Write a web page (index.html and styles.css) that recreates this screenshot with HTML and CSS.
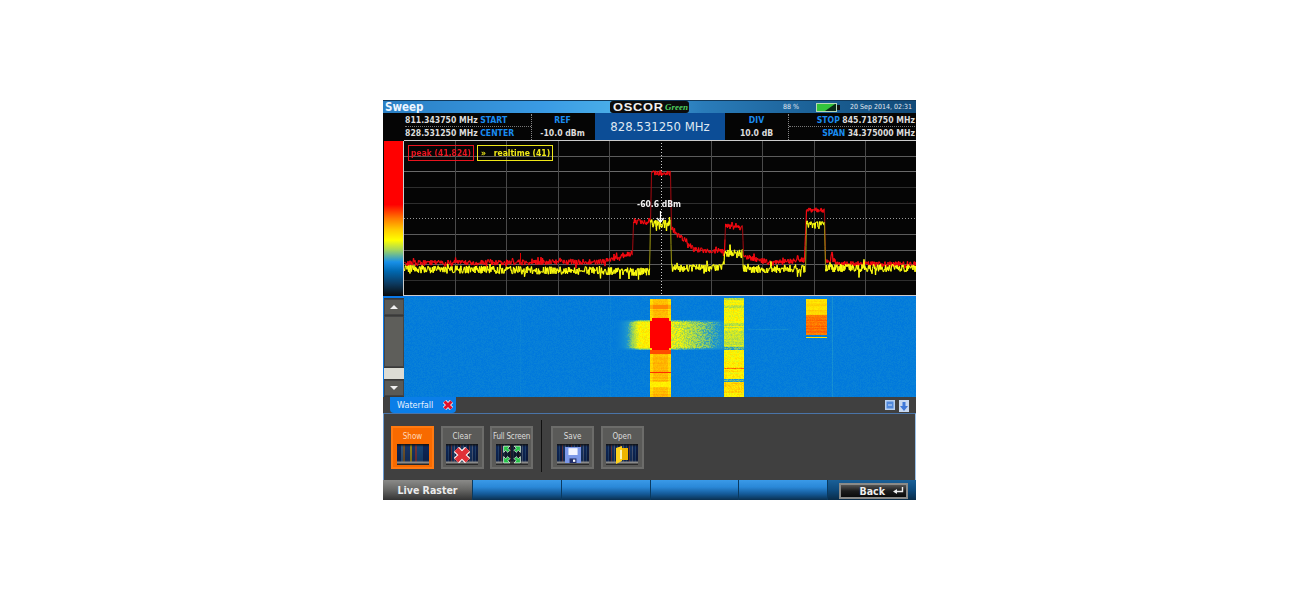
FILE: index.html
```html
<!DOCTYPE html>
<html lang="en">
<head>
<meta charset="utf-8">
<title>Sweep</title>
<link rel="stylesheet" href="styles.css">
</head>
<body>
<main class="device">
  <header class="titlebar">
    <span class="title">Sweep</span>
    <div class="logo"><span class="logo-word">OSCOR</span><span class="logo-green">Green</span></div>
    <div class="status">
      <span class="pct">88 %</span>
      <svg class="battery" viewBox="0 0 24 9" width="24" height="9"><rect x="0.5" y="0.5" width="20" height="8" fill="#0a2a18" stroke="#b8d8b8"/><path d="M1 1h18L9 8H1z" fill="#33c43a"/><rect x="21" y="2" width="3" height="5" fill="#111"/></svg>
      <span class="date">20 Sep 2014, 02:31</span>
    </div>
  </header>
  <section class="info">
    <div class="info-cell info-left">
      <div class="line dotted-b"><span>811.343750 MHz</span> <b>START</b></div>
      <div class="line"><span>828.531250 MHz</span> <b>CENTER</b></div>
    </div>
    <div class="info-cell info-mid"><b>REF</b><span>-10.0 dBm</span></div>
    <div class="info-center">828.531250 MHz</div>
    <div class="info-cell info-div"><b>DIV</b><span>10.0 dB</span></div>
    <div class="info-cell info-right">
      <div class="line dotted-b"><b>STOP</b> <span>845.718750 MHz</span></div>
      <div class="line"><b>SPAN</b> <span>34.375000 MHz</span></div>
    </div>
  </section>
  <section class="chart-row">
    <div class="colorbar"></div>
    <div class="chart">
      <svg class="grid" id="grid" viewBox="0 0 512 156" width="512" height="156"></svg>
      <canvas id="traces" width="512" height="156"></canvas>
      <div class="legend">
        <span class="tag tag-red">peak (41,824)</span>
        <span class="tag tag-yellow"><i>»</i> realtime (41)</span>
      </div>
      <div class="marker">-60.6 dBm</div>
      <svg class="marker-arrow" viewBox="0 0 9 12" width="9" height="12"><path d="M4.5 0v11M1 7l3.5 4L8 7" fill="none" stroke="#fff" stroke-width="1.2"/></svg>
    </div>
  </section>
  <section class="fall-row">
    <div class="scroll">
      <div class="sbtn"><span class="up"></span></div>
      <div class="strack"></div>
      <div class="sthumb"></div>
      <div class="sbtn"><span class="down"></span></div>
    </div>
    <canvas id="fall" width="512" height="100"></canvas>
  </section>
  <nav class="tabs">
    <div class="tab">Waterfall
      <svg class="tab-x" viewBox="0 0 12 12" width="12" height="12"><path d="M2.500 2.500l7 7M9.500 2.500l-7 7" stroke="#fff" stroke-width="4.500"/><path d="M2.500 2.500l7 7M9.500 2.500l-7 7" stroke="#e0102a" stroke-width="3"/></svg>
    </div>
    <div class="tab-icons">
      <svg viewBox="0 0 10 10" width="10" height="10"><rect width="10" height="10" fill="#b8d0f0"/><rect x="1.500" y="1.500" width="7" height="7" fill="#4f88dc"/><path d="M3 5h4" stroke="#cfe0f8"/></svg>
      <svg viewBox="0 0 10 12" width="10" height="12"><rect width="10" height="12" fill="#c8d8f0"/><path d="M3.500 2h3v4H9l-4 5-4-5h2.500z" fill="#3f78d8"/></svg>
    </div>
  </nav>
  <section class="panel">
    <div class="group">
      <button class="tool tool-on"><span>Show</span><span class="thumb thumb-show"></span></button>
      <button class="tool"><span>Clear</span><span class="thumb">
        <svg viewBox="0 0 16 16" width="18" height="18"><path d="M3 3l10 10M13 3L3 13" stroke="#fff" stroke-width="6.500"/><path d="M3 3l10 10M13 3L3 13" stroke="#e03038" stroke-width="4.500"/></svg>
      </span></button>
      <button class="tool"><span class="tight">Full Screen</span><span class="thumb">
        <svg viewBox="0 0 20 20" width="22" height="21"><rect x="1" y="1" width="18" height="18" fill="#111" opacity=".55"/><path d="M2 2l6 0-2 2 2 2-2 2-2-2-2 2zM18 2l-6 0 2 2-2 2 2 2 2-2 2 2zM2 18l6 0-2-2 2-2-2-2-2 2-2-2zM18 18l-6 0 2-2-2-2 2-2 2 2 2-2z" fill="#25c448" stroke="#eee" stroke-width=".7"/></svg>
      </span></button>
    </div>
    <div class="sep"></div>
    <div class="group">
      <button class="tool"><span>Save</span><span class="thumb">
        <svg viewBox="0 0 14 14" width="16" height="16"><path d="M0 0h14v14H0z" fill="#7c98e8"/><rect x="3" y="1" width="8" height="6" fill="#f2f4ff"/><rect x="4" y="10" width="6" height="4" fill="#24306a"/><rect x="7" y="11" width="2" height="2" fill="#fff"/></svg>
      </span></button>
      <button class="tool"><span>Open</span><span class="thumb">
        <svg viewBox="0 0 14 18" width="14" height="18"><path d="M1 2l6-2v15l-6 3z" fill="#ffd21e"/><path d="M7 2h6v12H7z" fill="#f0b400"/><path d="M5 4h2v9H5z" fill="#fff3b0"/></svg>
      </span></button>
    </div>
  </section>
  <footer class="softkeys">
    <div class="key key-live">Live Raster</div>
    <div class="key"></div>
    <div class="key"></div>
    <div class="key"></div>
    <div class="key"></div>
    <div class="key-back">
      <div class="back">Back <svg viewBox="0 0 11 8" width="11" height="8"><path d="M9.500 0v4.500H3" fill="none" stroke="#eee" stroke-width="1.400"/><path d="M0 4.500L4 2v5z" fill="#eee"/></svg></div>
    </div>
  </footer>
</main>
<script src="script.js"></script>
</body>
</html>
```
FILE: styles.css
```css
* { box-sizing: border-box; }
html, body { margin: 0; height: 100%; background: #fff; }
body { padding: 100px 0 0 383px; font-family: "DejaVu Sans", sans-serif; font-stretch: condensed; }
.device { width: 533px; height: 400px; display: flex; flex-direction: column; background: #404040; color: #e8e8e8; overflow: hidden; filter: blur(.3px); }
svg, canvas { display: block; }

.titlebar { height: 13px; flex: none; display: flex; align-items: center; background: linear-gradient(90deg, #2a7fc4 0, #3a9be4 30%, #49ade8 43%, #2a7cba 60%, #1c6298 80%, #114a78 100%); border-top: 1px solid #123a5c; }
.title { font-size: 11.500px; line-height: 12px; font-weight: bold; color: #eef6ff; margin-left: 2px; width: 225px; }
.logo { width: 79px; height: 12px; flex: none; background: #0c0c0c; border-radius: 3px; display: flex; align-items: center; padding-left: 3px; overflow: hidden; }
.logo-word { font: bold 10px/11px "Liberation Sans", sans-serif; letter-spacing: 0.6px; color: #f2f2f2; transform: scaleX(1.28); transform-origin: left center; width: 52px; flex: none; }
.logo-green { font: italic bold 9px/10px "Liberation Serif", serif; color: #4fd060; }
.status { flex: 1; display: flex; align-items: center; font-size: 7px; color: #e0e8f0; }
.pct { margin-left: 94px; width: 33px; flex: none; }
.date { margin-left: 10px; white-space: nowrap; }

.info { height: 27px; flex: none; display: flex; background: #050505; font-size: 8.600px; line-height: 13px; color: #dcdcdc; padding-top: 1px; }
.info b { color: #1a8cf0; font-weight: bold; }
.info span { font-weight: bold; }
.info-cell { height: 26px; }
.info-left { margin-left: 21px; width: 128px; border-right: 1px dotted #888; padding-left: 1px; }
.line { height: 13px; white-space: nowrap; }
.dotted-b { border-bottom: 1px dotted #777; }
.info-mid, .info-div { display: flex; flex-direction: column; align-items: center; }
.info-mid { width: 63px; padding-right: 2px; }
.info-center { width: 130px; margin-top: -1px; height: 27px; background: #0c4d96; color: #dfe8f2; font-size: 13px; line-height: 28px; text-align: center; }
.info-div { width: 64px; border-right: 1px dotted #888; }
.info-right { flex: 1; text-align: right; padding-right: 1px; }

.chart-row { height: 156px; flex: none; display: flex; background: #050505; }
.colorbar { width: 20px; margin: 1px 0 0 1px; border-right: 1px solid #ccc; background: linear-gradient(180deg, #ff0000 0, #ff0000 41%, #ff7a00 50%, #ffc800 57%, #ffff00 64%, #a8d858 70%, #1890e8 78%, #0068b0 84%, #0c3a60 92%, #0a0a0a 100%); }
.chart { width: 512px; height: 156px; position: relative; background: #050505; }
.grid, #traces { position: absolute; left: 0; top: 0; }
.legend { position: absolute; left: 4px; top: 5px; display: flex; gap: 3px; font-size: 8.500px; font-weight: bold; }
.tag { height: 16px; padding: 0 2px; white-space: nowrap; border: 1px solid; line-height: 14px; }
.tag-red { color: #e8141e; border-color: #e8141e; }
.tag-yellow { color: #f0e818; border-color: #f0e818; }
.tag i { font-style: normal; margin: 0 5px 0 1px; }
.marker { position: absolute; left: 233px; top: 59px; font-size: 8.500px; line-height: 10px; font-weight: bold; color: #f0f0f0; white-space: nowrap; }
.marker-arrow { position: absolute; left: 252px; top: 71px; }

.fall-row { height: 101px; flex: none; display: flex; padding-top: 1px; background: #0a78e8; border-top: 1px solid #0a78e8; }
.scroll { width: 20px; margin-left: 1px; display: flex; flex-direction: column; background: #3a3a38; }
.sbtn { height: 16px; flex: none; background: #5a5a56; border: 1px solid #444; display: flex; align-items: center; justify-content: center; margin: 1px 0; }
.up, .down { width: 0; height: 0; border-left: 4px solid transparent; border-right: 4px solid transparent; }
.up { border-bottom: 4px solid #f0f0f0; }
.down { border-top: 4px solid #f0f0f0; }
.strack { flex: 1; background: #5e5e5a; border: 1px solid #444; margin-bottom: 1px; }
.sthumb { height: 11px; flex: none; background: #dcdcd4; }
#fall { width: 512px; height: 100px; margin-top: -1px; }

.tabs { height: 17px; flex: none; display: flex; justify-content: space-between; align-items: flex-start; background: #404040; padding-left: 7px; }
.tab { width: 66px; height: 16px; background: #0a7ee8; border-radius: 0 0 4px 4px; font-size: 9px; line-height: 17px; color: #e8f2ff; padding-left: 7px; position: relative; }
.tab-x { position: absolute; left: 52px; top: 2px; }
.tab-icons { display: flex; gap: 4px; padding: 3px 7px 0 0; }

.panel { height: 67px; flex: none; display: flex; align-items: flex-start; padding: 12px 0 0 7px; background: #404040; border-top: 1px solid #4a74a8; border-left: 1px solid #6a9ad0; border-right: 1px solid #9ac0e8; margin-top: -1px; }
.group { display: flex; gap: 6.500px; }
.sep { width: 1px; height: 52px; margin: -6px 9px 0 8px; background: #111; }
.tool { width: 43px; height: 43px; padding: 4px 0 0; display: flex; flex-direction: column; align-items: center; background: #5a5a58; border: 2px solid #6c6c6a; font-family: "DejaVu Sans", sans-serif; font-stretch: condensed; font-size: 8px; line-height: 10px; color: #dcdcdc; }
.tool-on { background: #f86a00; border-color: #ff7a10; color: #ffd8b8; }
.tight { white-space: nowrap; letter-spacing: -0.2px; }
.thumb { width: 32px; height: 21px; margin-top: 2px; display: flex; align-items: center; justify-content: center; background: linear-gradient(180deg, #111 0, rgba(0,0,0,.1) 14%, rgba(0,0,0,.25) 78%, #8a8a8a 88%, #111 100%), repeating-linear-gradient(90deg, #0e2a60 0 2px, #254878 2px 3px, #10204a 3px 5px, #703840 5px 6px, #18386c 6px 8px, #506080 8px 9px); }
.thumb-show { background: linear-gradient(180deg, #111 0, rgba(0,0,0,.1) 14%, rgba(0,0,0,.25) 78%, #8a8a8a 88%, #111 100%), linear-gradient(90deg, #0e2a60 0 14%, #3a6088 14% 20%, #7a5a30 20% 26%, #1a3a70 26% 40%, #a09020 40% 46%, #1a3a70 46% 56%, #803840 56% 62%, #1a4a80 62% 80%, #0e2a60 80%); }

.softkeys { height: 20px; flex: none; display: flex; background: #0a3a60; }
.key { width: 87.750px; margin-right: 1px; background: linear-gradient(180deg, #3a9ae8 0, #2a88d8 35%, #145a98 70%, #0a3050 100%); }
.key-live { width: 89px; background: linear-gradient(180deg, #8a8a88 0, #6a6a68 45%, #333 100%); font-size: 10.500px; font-weight: bold; line-height: 21px; color: #ececec; text-align: center; }
.key-back { flex: 1; padding: 3px 0 0 11px; background: linear-gradient(180deg, #1a6098 0, #0e4a7c 50%, #0a2c48 100%); }
.back { width: 69px; height: 16px; display: flex; align-items: center; gap: 8px; justify-content: flex-end; padding-right: 2px; background: linear-gradient(180deg, #555 0, #1c1c1c 50%, #0a0a0a 100%); border: 2px solid #8a8a88; font-size: 10.500px; line-height: 12px; font-weight: bold; color: #eee; }
```
FILE: script.js
```js
// Seeded generator so the spectrum and the waterfall are the same on every load.
var seed = 41824;
function rnd() { seed = (seed * 16807) % 2147483647; return seed / 2147483647; }

// Grid of the spectrum display
(function () {
  var svg = document.getElementById('grid'), s = '';
  var rows = [[16, '#5c5c5c'], [31, '#6a6a6a'], [47, '#2e2e2e'], [63, '#2e2e2e'], [94, '#5c5c5c'], [110, '#5c5c5c'], [124, '#5c5c5c'], [140, '#2e2e2e']];
  rows.forEach(function (r) { s += '<path d="M0 ' + (r[0] + .5) + 'H512" stroke="' + r[1] + '"/>'; });
  s += '<path d="M0 78.500H512" stroke="#999" stroke-dasharray="1 2"/>';
  for (var k = 1; k < 10; k++) {
    var x = Math.round(51.2 * k) + .5;
    s += k === 5 ? '<path d="M' + (x + 1) + ' 0V156" stroke="#ccc" stroke-dasharray="1 2"/>' : '<path d="M' + x + ' 0V156" stroke="#4a4a4a"/>';
  }
  s += '<path d="M0 .5H512M0 155.500H512" stroke="#ccc"/>';
  svg.innerHTML = s;
})();

function lerpStops(stops, x) {
  for (var i = 1; i < stops.length; i++) {
    if (x <= stops[i][0]) {
      var a = stops[i - 1], b = stops[i];
      return a[1] + (b[1] - a[1]) * (x - a[0]) / Math.max(1, b[0] - a[0]);
    }
  }
  return stops[stops.length - 1][1];
}

// Traces, in page x and y relative to the chart
(function () {
  var c = document.getElementById('traces').getContext('2d');
  var peak = [[0, 123], [195, 122], [212, 118], [228, 113], [229, 82], [246, 82], [247, 33], [266, 33], [267, 88], [280, 100], [290, 110], [320, 111], [321, 86], [338, 88], [339, 116], [366, 123], [400, 120], [402, 70], [420, 70], [421, 120], [426, 120], [427, 112], [429, 120], [433, 124], [512, 124]];
  var real = [[0, 129], [195, 131], [245, 132], [246, 84], [266, 84], [267, 128], [319, 128], [320, 113], [338, 113], [339, 129], [401, 129], [402, 85], [420, 85], [421, 128], [512, 128]];
  function draw(stops, col, dim, amp) {
    var px = 0, py = 0;
    for (var i = 0; i < 1024; i++) {
      var x = i / 2;
      var base = lerpStops(stops, x);
      var y = base + (rnd() - .5) * amp + (rnd() > .9 ? (rnd() - .5) * amp * 1.5 : 0);
      if (i) {
        var steep = Math.abs(y - py) > 14;
        c.strokeStyle = steep ? dim : col;
        c.lineWidth = steep ? 1 : 1.2;
        c.beginPath(); c.moveTo(px + .5, py); c.lineTo(x + .5, y); c.stroke();
      }
      px = x; py = y;
    }
  }
  draw(peak, '#f80a12', '#a80a10', 5.500);
  c.strokeStyle = '#d00'; c.lineWidth = 1; c.beginPath(); c.moveTo(116.500, 123); c.lineTo(116.500, 113); c.stroke();
  draw(real, '#ffff10', '#a09a10', 8);
})();

// Waterfall: heat 0 = blue, 1 = yellow, 2 = red
(function () {
  var cv = document.getElementById('fall'), c = cv.getContext('2d'), w = 512, h = 100;
  var img = c.createImageData(w, h), d = img.data;
  function colour(t) {
    var s = [[0, 0, 120, 220], [.35, 30, 150, 205], [.6, 150, 210, 90], [1, 255, 250, 0], [1.5, 255, 150, 0], [2, 255, 0, 0]];
    for (var i = 1; i < s.length; i++) {
      if (t <= s[i][0]) {
        var a = s[i - 1], b = s[i], f = (t - a[0]) / (b[0] - a[0]);
        return [a[1] + (b[1] - a[1]) * f, a[2] + (b[2] - a[2]) * f, a[3] + (b[3] - a[3]) * f];
      }
    }
    return [255, 0, 0];
  }
  // Row strength of the middle band
  var band2 = [];
  for (var r = 0; r < h; r++) {
    var v = 1;
    if (r < 3) v = .65;
    else if (r < 8) v = .95;
    else if (r < 11) v = .7;
    else if (r < 20) v = .9;
    else if (r < 25) v = .95;
    else if (r < 40) v = .6 + rnd() * .35;
    else if (r < 50) v = .7;
    else if (r < 53) v = .4;
    else if (r < 70) v = .95;
    else if (r === 71) v = 1.5;
    else if (r < 82) v = .9 + rnd() * .15;
    else if (r < 85) v = .35;
    else if (r < 96) v = 1.12;
    else v = .95;
    band2.push(v);
  }
  for (var y = 0; y < h; y++) {
    var rowNoise = rnd() * .14;
    for (var x = 0; x < w; x++) {
      var t = rnd() * .12;
      if (x === 116 || x === 206) t += .06;
      if (x === 428) t += .2;
      if (y === 32 && x > 343 && x < 384) t += .15;
      // Cross of the strong carrier
      if (y >= 23 && y <= 52) {
        var fy = Math.min(1, Math.min(y - 21, 54 - y) / 4);
        if (x > 205 && x < 246) {
          var l = (x - 205) / 30;
          t = Math.max(t, fy * Math.min(1.05, l * l * 1.05) * (.85 + rnd() * .25));
        }
        if (x > 266 && x < 322) t = Math.max(t, fy * (1.05 - (x - 267) / 72) * (.65 + rnd() * .45));
      }
      // Carrier 1
      if (x >= 246 && x < 267 && y >= 2) {
        var edge = (x < 249 || x > 263) ? -.15 : 0;
        t = 1.2 + rowNoise + rnd() * .12 + edge;
        if (y >= 8 && y <= 11) t = 1.55 + edge;
        var corner = (y < 24 || y > 50) && (x < 248 || x > 264);
        if (y >= 21 && y <= 52 && !corner) t = 2;
        else if (y > 52 && y <= 56) t = 1.75;
        if (y === 75) t = 1.85;
        if (y > 84 && y < 90) t = 1 + rnd() * .1;
      }
      // Carrier 2
      if (x >= 320 && x < 340 && y >= 1) t = band2[y] + rowNoise + (rnd() - .5) * .25;
      // Carrier 3
      if (x >= 402 && x < 423) {
        if (y >= 2 && y < 18) t = 1.05 + rowNoise + rnd() * .1;
        else if (y >= 18 && y < 38) t = 1.5 + rowNoise + rnd() * .1;
        if (y === 40) t = 1.15;
      }
      var col = colour(t), p = (y * w + x) * 4;
      d[p] = col[0]; d[p + 1] = col[1]; d[p + 2] = col[2]; d[p + 3] = 255;
    }
  }
  c.putImageData(img, 0, 0);
})();
```
